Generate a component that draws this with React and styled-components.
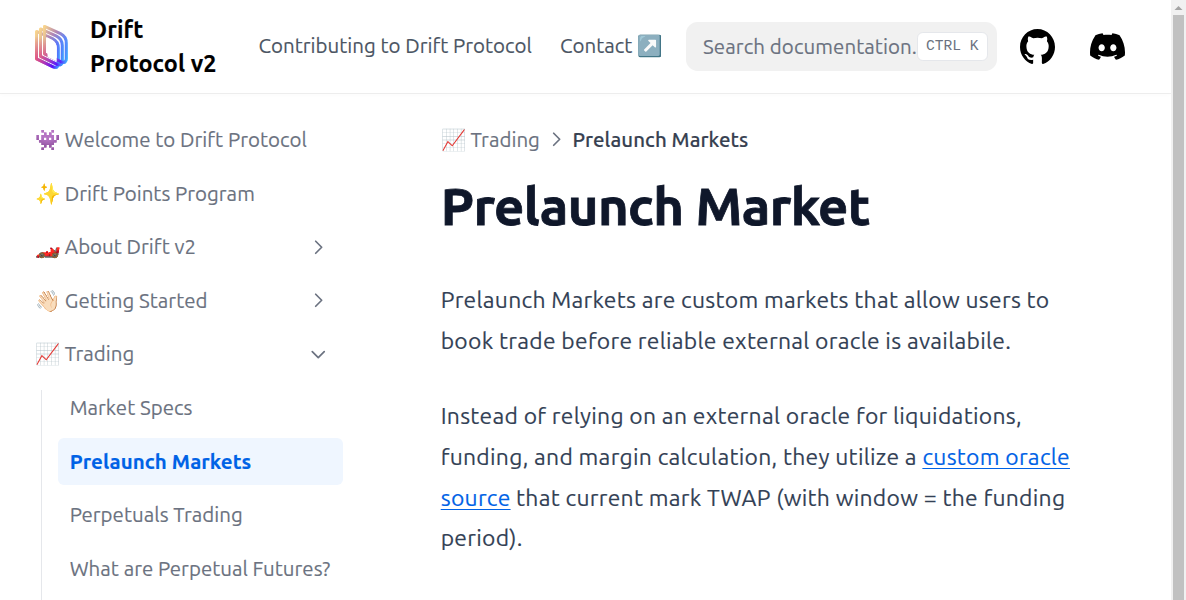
import React from 'react';
import styled, { createGlobalStyle } from 'styled-components';
import { SiDiscord } from 'react-icons/si';

const GlobalStyle = createGlobalStyle`
  html { font-size: 23.4px; }
  *, *::before, *::after { box-sizing: border-box; }
  body {
    margin: 0;
    background: #fff;
    font-family: Ubuntu, "Noto Sans", sans-serif;
    font-size: 1rem;
    line-height: 1.5;
    letter-spacing: 0.02px;
    -webkit-text-stroke: 0.15px;
    overflow: hidden;
  }
`;

const Window = styled.div`
  display: flex;
  height: 600px;
  overflow: hidden;
`;

const Page = styled.div`
  flex: 1;
  min-width: 0;
  display: flex;
  flex-direction: column;
`;

const Header = styled.header`
  flex: none;
  display: flex;
  align-items: center;
  height: 93px;
  padding: 0 1.5rem;
  box-shadow: 0 2px 4px rgba(0, 0, 0, 0.02), 0 1px 0 rgba(0, 0, 0, 0.06);
`;

const Brand = styled.a`
  display: flex;
  align-items: center;
  gap: 21px;
  margin-right: auto;
  color: #000;
`;

const BrandName = styled.span`
  width: 130px;
  padding-bottom: 2px;
  font-weight: 700;
  line-height: 34px;
  letter-spacing: 0.08px;
`;

const NavLink = styled.a`
  margin-right: ${(p) => p.$gap}px;
  padding-bottom: 2px;
  font-size: 0.875rem;
  line-height: 1.25rem;
  white-space: nowrap;
  color: #4b5563;
`;

const Search = styled.div`
  position: relative;
  display: flex;
  align-items: center;
  width: 311px;
  height: 49px;
  margin-right: 23.4px;
  padding: 0 0.75rem;
  border-radius: 0.5rem;
  background: #f1f1f1;
  color: #6b7280;
  font-size: 0.875rem;
  line-height: 1.25rem;
  letter-spacing: 0.08px;
  white-space: nowrap;
`;

const Shortcut = styled.kbd`
  position: absolute;
  top: 10px;
  right: 9px;
  height: 29px;
  padding: 0 8px;
  border: 1px solid #e5e7eb;
  border-radius: 0.25rem;
  background: #fff;
  color: #6b7280;
  font-family: "Liberation Mono", monospace;
  font-size: 14.6px;
  line-height: 27px;
  letter-spacing: 0;
  -webkit-text-stroke: 0;
  white-space: pre;
`;

const IconLink = styled.a`
  display: flex;
  margin-right: ${(p) => p.$gap || 0}px;
  color: #000;
`;

const Body = styled.div`
  flex: 1;
  min-height: 0;
  display: flex;
`;

const Sidebar = styled.nav`
  flex: none;
  width: 343px;
  padding: 23.2px 0 0 1rem;
`;

const Menu = styled.ul`
  display: flex;
  flex-direction: column;
  gap: 6.8px;
  margin: 0;
  padding: 0;
  list-style: none;
`;

const SubMenu = styled(Menu)`
  position: relative;
  margin-top: 6.8px;
  padding-left: 34.6px;

  &::before {
    content: "";
    position: absolute;
    left: 17.6px;
    top: 5.85px;
    bottom: -40px;
    width: 1px;
    background: #e5e7eb;
  }
`;

const MenuLink = styled.a`
  display: flex;
  align-items: center;
  justify-content: space-between;
  height: 46.8px;
  padding: 0 0.5rem;
  border-radius: 0.25rem;
  font-size: 0.875rem;
  line-height: 1.25rem;
  white-space: nowrap;
  color: ${(p) => (p.$active ? '#0062e6' : '#6b7280')};
  font-weight: ${(p) => (p.$active ? 700 : 400)};
  letter-spacing: ${(p) => (p.$active ? 0.08 : 0.02)}px;
  background: ${(p) => (p.$active ? '#eff6ff' : 'transparent')};
`;

const Article = styled.main`
  flex: 1;
  min-width: 0;
  padding: 32px 70px 0 97.7px;
  color: #334155;
`;

const Crumbs = styled.div`
  display: flex;
  align-items: center;
  gap: 6px;
  font-size: 0.875rem;
  line-height: 1.25rem;
  color: #6b7280;
`;

const CurrentCrumb = styled.span`
  font-weight: 500;
  letter-spacing: 0.06px;
  color: #374151;
`;

const Title = styled.h1`
  margin: 23px 0 0;
  font-size: 2.25rem;
  line-height: 2.5rem;
  font-weight: 700;
  letter-spacing: -0.6px;
  -webkit-text-stroke: 0.8px;
  color: #0f172a;
`;

const Paragraph = styled.p`
  margin: ${(p) => p.$top}px 0 0;
  font-size: 22.9px;
  line-height: 40.6px;
  letter-spacing: 0.27px;
`;

const TextLink = styled.a`
  color: #0062e6;
  text-decoration: underline;
  text-decoration-thickness: from-font;
  text-underline-position: from-font;
`;

const Scrollbar = styled.div`
  flex: none;
  display: flex;
  flex-direction: column;
  align-items: center;
  width: 15px;
  background: #f1f1f1;
`;

const ScrollArrow = styled.svg`
  flex: none;
  width: 15px;
  height: 15px;
`;

const Thumb = styled.div`
  flex: 1;
  width: 11px;
  background: #c1c1c1;
`;

const LogoMark = styled.svg`
  flex: none;
  width: 34px;
  height: 45px;
  margin-top: 2px;
`;

const ring =
  'M1.5 6.4 L17.5 13.6 Q23.3 16.6 23.3 23 V38.5 Q23.3 43.6 18.2 41.8 L1.5 33.8 Z';

const Logo = () => (
  <LogoMark viewBox="0 0 34 45" fill="none">
    <defs>
      <linearGradient id="across" gradientUnits="userSpaceOnUse" x1="0" y1="10" x2="33" y2="20">
        <stop offset="0" stopColor="#f9d58c" />
        <stop offset="0.4" stopColor="#b184b4" />
        <stop offset="0.7" stopColor="#5c86fa" />
        <stop offset="1" stopColor="#3cd2ff" />
      </linearGradient>
      <linearGradient id="base" gradientUnits="userSpaceOnUse" x1="0" y1="36" x2="24" y2="40">
        <stop offset="0" stopColor="#e8487a" />
        <stop offset="0.4" stopColor="#b030b8" />
        <stop offset="0.75" stopColor="#5a10fb" />
        <stop offset="0.9" stopColor="#4a6cff" />
        <stop offset="1" stopColor="#40a8ff" />
      </linearGradient>
      <linearGradient id="fade" gradientUnits="userSpaceOnUse" x1="18" y1="14" x2="14" y2="40">
        <stop offset="0" stopColor="#000" />
        <stop offset="1" stopColor="#fff" />
      </linearGradient>
      <mask id="lower" maskUnits="userSpaceOnUse" x="0" y="0" width="34" height="45">
        <rect width="34" height="45" fill="url(#fade)" />
      </mask>
      <g id="rings" strokeWidth="3" strokeLinejoin="round">
        <path d={ring} />
        <path d={ring} transform="translate(4 -2.5)" />
        <path d={ring} transform="translate(8 -5)" />
      </g>
      {/* the rear rings show only outside the window of the front one */}
      <clipPath id="window">
        <path clipRule="evenodd" d="M0 0H34V45H0Z M11.5 12 L17 14.8 Q21.8 17.5 21.8 23 V36.5 L12.5 32 Z" />
      </clipPath>
    </defs>
    <g clipPath="url(#window)">
      <use href="#rings" stroke="url(#across)" />
      <g mask="url(#lower)">
        <use href="#rings" stroke="url(#base)" />
      </g>
    </g>
  </LogoMark>
);

const GitHub = () => (
  <svg width="35" height="35" viewBox="3 3 18 18" fill="currentColor">
    <path d="M12 3C7.0275 3 3 7.12937 3 12.2276C3 16.3109 5.57625 19.7597 9.15374 20.9824C9.60374 21.0631 9.77249 20.7863 9.77249 20.5441C9.77249 20.3249 9.76125 19.5982 9.76125 18.8254C7.5 19.2522 6.915 18.2602 6.735 17.7412C6.63375 17.4759 6.19499 16.6569 5.8125 16.4378C5.4975 16.2647 5.0475 15.838 5.80124 15.8264C6.51 15.8149 7.01625 16.4954 7.18499 16.7723C7.99499 18.1679 9.28875 17.7758 9.80625 17.5335C9.885 16.9337 10.1212 16.53 10.38 16.2993C8.3775 16.0687 6.285 15.2728 6.285 11.7432C6.285 10.7397 6.63375 9.9092 7.20749 9.26326C7.1175 9.03257 6.8025 8.08674 7.2975 6.81794C7.2975 6.81794 8.05125 6.57571 9.77249 7.76377C10.4925 7.55615 11.2575 7.45234 12.0225 7.45234C12.7875 7.45234 13.5525 7.55615 14.2725 7.76377C15.9937 6.56418 16.7475 6.81794 16.7475 6.81794C17.2424 8.08674 16.9275 9.03257 16.8375 9.26326C17.4113 9.9092 17.76 10.7281 17.76 11.7432C17.76 15.2843 15.6563 16.0687 13.6537 16.2993C13.98 16.5877 14.2613 17.1414 14.2613 18.0065C14.2613 19.2407 14.25 20.2326 14.25 20.5441C14.25 20.7863 14.4188 21.0746 14.8688 20.9824C16.6554 20.364 18.2079 19.1866 19.3078 17.6162C20.4077 16.0457 20.9995 14.1611 21 12.2276C21 7.12937 16.9725 3 12 3Z" />
  </svg>
);

const Chevron = styled(({ open, ...rest }) => (
  <svg viewBox="0 0 24 24" fill="none" stroke="currentColor" strokeLinecap="round" strokeLinejoin="round" {...rest}>
    <path d={open ? 'M19 9l-7 7-7-7' : 'M9 5l7 7-7 7'} />
  </svg>
))`
  flex: none;
  width: 20.5px;
  height: 20.5px;
  margin-right: ${(p) => p.$inset || 0}px;
  stroke-width: 2;
`;

const topItems = [
  { label: '👾 Welcome to Drift Protocol' },
  { label: '✨ Drift Points Program' },
  { label: '🏎️ About Drift v2', folder: true },
  { label: '👋🏻 Getting Started', folder: true },
];

const tradingItems = [
  'Market Specs',
  'Prelaunch Markets',
  'Perpetuals Trading',
  'What are Perpetual Futures?',
];

export default function App() {
  return (
    <>
      <GlobalStyle />
      <Window>
        <Page>
          <Header>
            <Brand>
              <Logo />
              <BrandName>Drift Protocol v2</BrandName>
            </Brand>
            <NavLink $gap={28}>Contributing to Drift Protocol</NavLink>
            <NavLink $gap={23.4}>Contact ↗️</NavLink>
            <Search>
              Search documentation.
              <Shortcut>CTRL K</Shortcut>
            </Search>
            <IconLink $gap={35}>
              <GitHub />
            </IconLink>
            <IconLink $gap={11}>
              <SiDiscord size={35} />
            </IconLink>
          </Header>
          <Body>
            <Sidebar>
              <Menu>
                {topItems.map((item) => (
                  <li key={item.label}>
                    <MenuLink>
                      {item.label}
                      {item.folder && <Chevron $inset={3} />}
                    </MenuLink>
                  </li>
                ))}
                <li>
                  <MenuLink>
                    📈 Trading
                    <Chevron open $inset={3} />
                  </MenuLink>
                  <SubMenu>
                    {tradingItems.map((label) => (
                      <li key={label}>
                        <MenuLink $active={label === 'Prelaunch Markets'}>{label}</MenuLink>
                      </li>
                    ))}
                  </SubMenu>
                </li>
              </Menu>
            </Sidebar>
            <Article>
              <Crumbs>
                <span>📈 Trading</span>
                <Chevron />
                <CurrentCrumb>Prelaunch Markets</CurrentCrumb>
              </Crumbs>
              <Title>Prelaunch Market</Title>
              <Paragraph $top={44.4}>
                Prelaunch Markets are custom markets that allow users to book trade before reliable
                external oracle is availabile.
              </Paragraph>
              <Paragraph $top={35.1}>
                Instead of relying on an external oracle for liquidations, funding, and margin
                calculation, they utilize a <TextLink>custom oracle source</TextLink> that current
                mark TWAP (with window = the funding period).
              </Paragraph>
            </Article>
          </Body>
        </Page>
        <Scrollbar>
          <ScrollArrow viewBox="0 0 15 15">
            <path d="M3.5 10h8L7.5 6z" fill="#a3a3a3" />
          </ScrollArrow>
          <Thumb />
        </Scrollbar>
      </Window>
    </>
  );
}
